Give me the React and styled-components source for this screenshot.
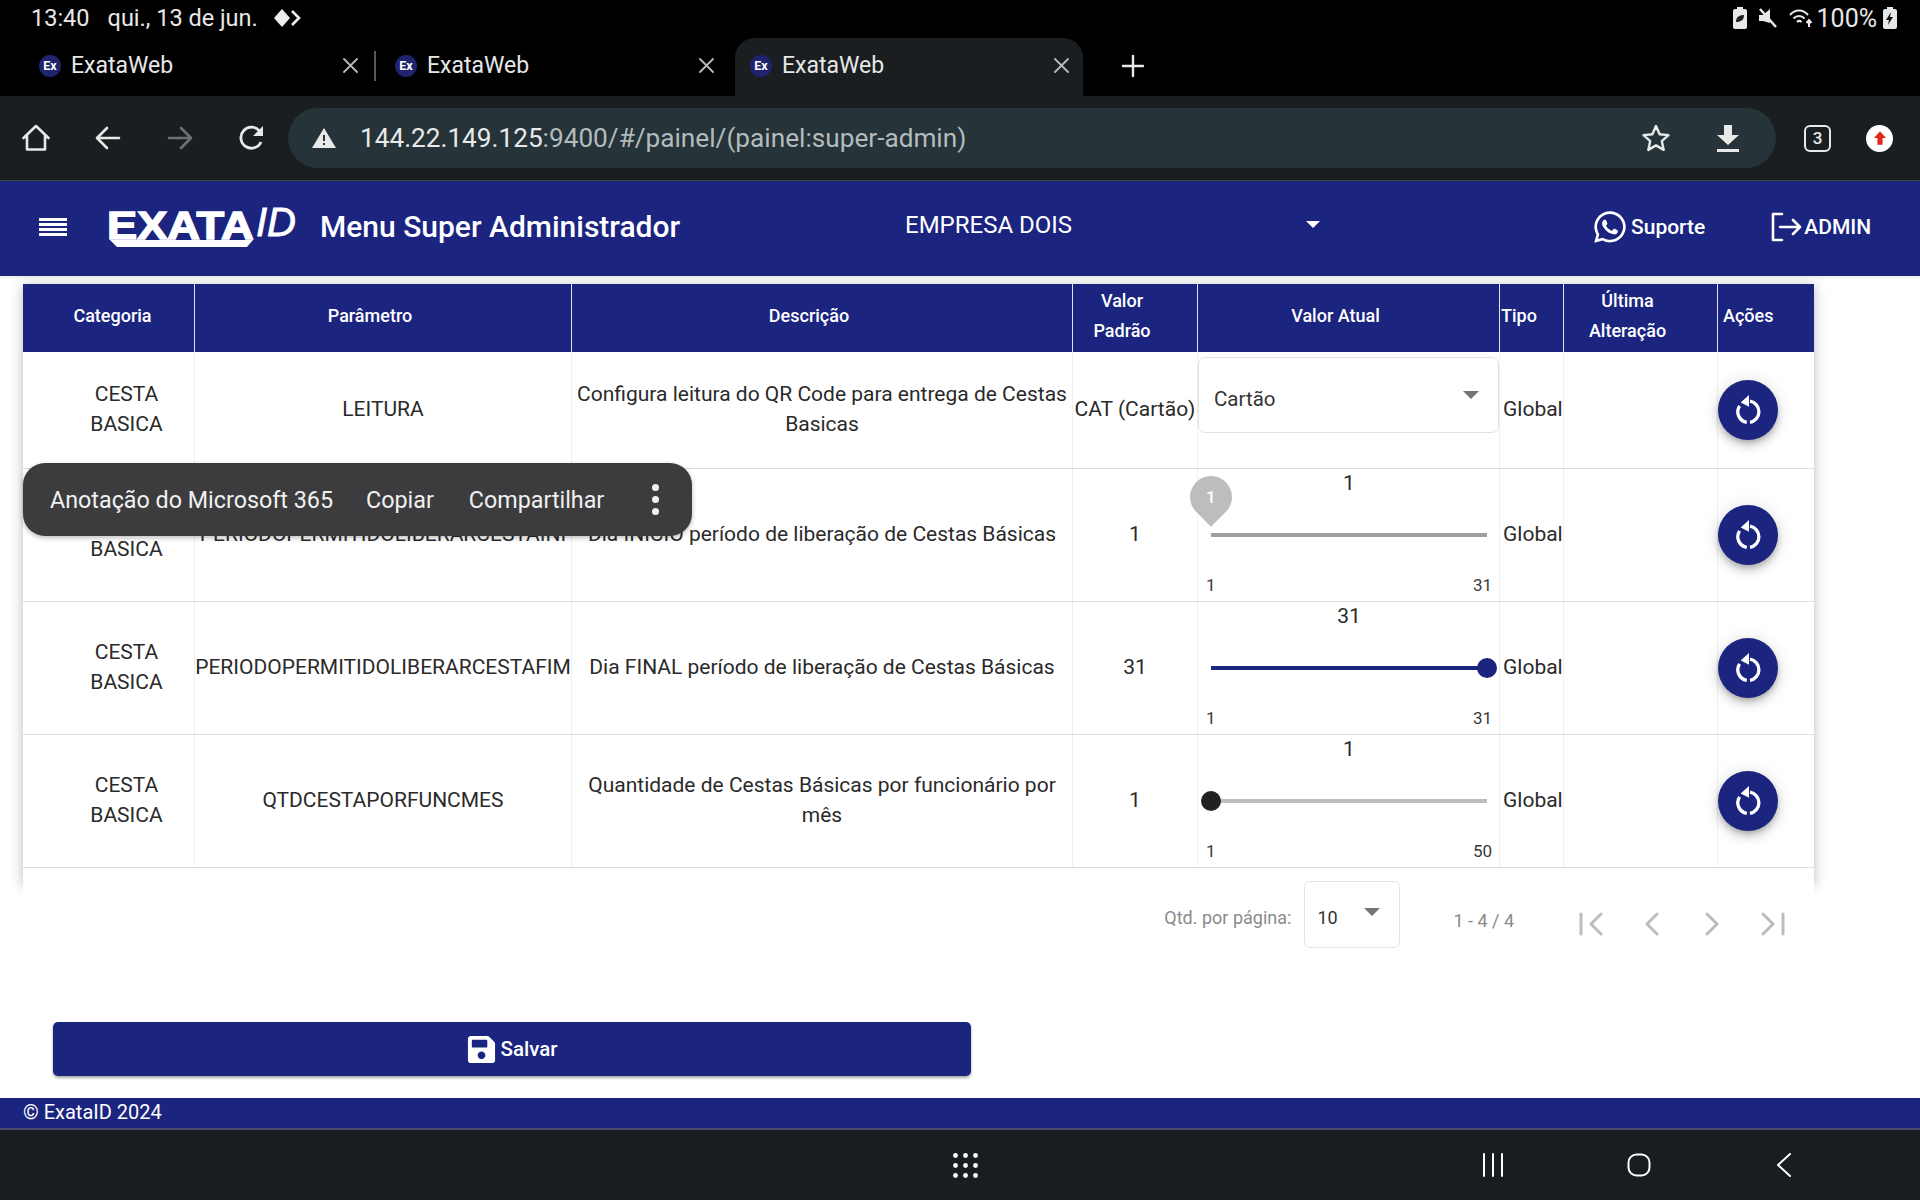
import React from 'react';
import styled, { createGlobalStyle } from 'styled-components';
import { FaWhatsapp, FaSave } from 'react-icons/fa';

const NAVY = '#1b247f';

const GlobalStyle = createGlobalStyle`
  html, body {
    margin: 0;
    padding: 0;
    background: #fff;
    font-family: Roboto, "Liberation Sans", sans-serif;
  }
  * { box-sizing: border-box; }
`;

const Page = styled.div`
  width: 1920px;
  height: 1200px;
  display: flex;
  flex-direction: column;
  overflow: hidden;
  position: relative;
`;

const Glyph = styled.svg`
  margin-left: ${p => p.$left || 0}px;
  flex: none;
`;

/* status bar */
const StatusBar = styled.div`
  height: 38px;
  background: #000;
  color: #e8e8e8;
  display: flex;
  align-items: center;
  padding: 0 23px 2px 31px;
  font-size: 23.5px;
  flex: none;
`;
const StatusDate = styled.span`
  margin-left: 18px;
`;
const StatusRight = styled.div`
  margin-left: auto;
  display: flex;
  align-items: center;
  gap: 7px;
  font-size: 25px;
`;
const Percent = styled.span`
  margin: 0 -1px 0 -3px;
`;

/* tabs */
const TabStrip = styled.div`
  height: 58px;
  background: #000;
  display: flex;
  align-items: stretch;
  flex: none;
`;
const Tab = styled.div`
  width: ${p => p.$width}px;
  display: flex;
  align-items: center;
  padding: 0 ${p => p.$right}px 3px ${p => p.$pad}px;
  color: #e6e8e8;
  font-size: 23px;
  background: ${p => (p.$active ? '#1b1e20' : 'transparent')};
  border-radius: ${p => (p.$active ? '20px 20px 0 0' : '0')};
`;
const Favicon = styled.span`
  width: 22px;
  height: 22px;
  border-radius: 50%;
  background: #20246e;
  color: #fff;
  font-size: 12.5px;
  font-weight: 700;
  display: flex;
  align-items: center;
  justify-content: center;
  margin-right: 10px;
  flex: none;
`;
const TabTitle = styled.span`
  flex: 1;
`;
const TabDivider = styled.div`
  width: 2px;
  height: 30px;
  background: #55585a;
  align-self: center;
  margin: -3px -1px 0;
`;
const NewTab = styled.div`
  margin-left: 38px;
  padding-bottom: 3px;
  display: flex;
  align-items: center;
`;

/* toolbar */
const Toolbar = styled.div`
  height: 85px;
  background: #1b1e20;
  border-bottom: 1px solid #39463c;
  display: flex;
  align-items: center;
  flex: none;
`;
const ToolIcon = styled.div`
  width: 72px;
  height: 40px;
  display: flex;
  align-items: center;
  justify-content: center;
  flex: none;
`;
const AddressBar = styled.div`
  width: 1488px;
  height: 60px;
  border-radius: 30px;
  background: #263338;
  display: flex;
  align-items: center;
  padding-right: 12px;
  flex: none;
`;
const Warn = styled.div`
  width: 72px;
  display: flex;
  justify-content: center;
`;
const Url = styled.div`
  font-size: 26.2px;
  color: #b4bbbd;
  flex: 1;
  b {
    font-weight: 400;
    color: #e8eaea;
  }
`;
const TabCount = styled.div`
  width: 27px;
  height: 27px;
  margin-left: 28px;
  border: 2px solid #e8eaea;
  border-radius: 6px;
  color: #e8eaea;
  font-size: 17px;
  font-weight: 500;
  display: flex;
  align-items: center;
  justify-content: center;
`;
const Avatar = styled.div`
  width: 27px;
  height: 27px;
  border-radius: 50%;
  margin-left: 35px;
  background: #fff;
  display: flex;
  align-items: center;
  justify-content: center;
`;

/* app header */
const AppHeader = styled.header`
  height: 95px;
  background: ${NAVY};
  color: #fff;
  display: flex;
  align-items: center;
  padding: 0 0 3px 39px;
  flex: none;
`;
const Burger = styled.div`
  width: 28px;
  display: flex;
  flex-direction: column;
  gap: 2px;
  span {
    height: 3px;
    background: #fff;
  }
`;
const Logo = styled.div`
  position: relative;
  width: 189px;
  height: 44px;
  margin-left: 40px;
  flex: none;
`;
const LogoWord = styled.span`
  position: absolute;
  left: 0;
  top: -1px;
  font-family: "Liberation Sans", Arial, sans-serif;
  font-weight: 700;
  font-size: 38px;
  line-height: 44px;
  -webkit-text-stroke: 1.4px #fff;
  transform: scaleX(1.19);
  transform-origin: left center;
`;
const LogoId = styled.span`
  position: absolute;
  left: 149px;
  top: -5px;
  font-family: "Liberation Sans", Arial, sans-serif;
  font-style: italic;
  font-size: 40px;
  line-height: 44px;
  font-weight: 400;
  -webkit-text-stroke: 0.8px #fff;
`;
const LogoSwoosh = styled.svg`
  position: absolute;
  left: 3px;
  top: 34px;
`;
const AppTitle = styled.h1`
  margin: 0 0 2px 24px;
  font-size: 30px;
  font-weight: 500;
  width: 585px;
  flex: none;
`;
const CompanySelect = styled.div`
  width: 415px;
  display: flex;
  align-items: center;
  justify-content: space-between;
  font-size: 24px;
  margin-bottom: 5px;
  flex: none;
`;
const Caret = styled.span`
  display: block;
  width: 0;
  height: 0;
  border-left: ${p => p.$size}px solid transparent;
  border-right: ${p => p.$size}px solid transparent;
  border-top: ${p => p.$size}px solid ${p => p.$color};
`;
const HeaderLink = styled.div`
  display: flex;
  align-items: center;
  font-size: 21px;
  font-weight: 500;
  gap: ${p => p.$gap}px;
  margin-left: ${p => p.$left}px;
`;

/* content */
const Main = styled.main`
  flex: 1;
  background: #fff;
  display: flex;
  flex-direction: column;
  padding-top: 8px;
  box-shadow: inset 0 4px 4px -3px rgba(0, 0, 0, 0.12);
`;
const Card = styled.div`
  width: 1791px;
  margin-left: 23px;
  height: 600px;
  background: #fff;
  box-shadow: 0 2px 12px rgba(0, 0, 0, 0.28);
`;
const cols = '172px 377px 501px 125px 302px 64px 154px 96px';
const HeadRow = styled.div`
  display: grid;
  grid-template-columns: ${cols};
  height: 68px;
  background: ${NAVY};
`;
const HeadCell = styled.div`
  display: flex;
  align-items: center;
  justify-content: ${p => p.$justify || 'center'};
  text-align: center;
  padding: ${p => p.$pad || '0 26px 5px 0'};
  color: #fff;
  font-size: 18px;
  font-weight: 500;
  line-height: 30px;
  border-right: 1px solid #dfe1ee;
  &:last-child { border-right: 0; }
`;
const Row = styled.div`
  display: grid;
  grid-template-columns: ${cols};
  height: ${p => p.$height}px;
  border-bottom: 1px solid #dcdcdc;
`;
const Cell = styled.div`
  display: flex;
  align-items: center;
  justify-content: ${p => p.$justify || 'center'};
  text-align: center;
  padding: ${p => p.$pad || '0 4px 2px'};
  font-size: 21px;
  line-height: 30px;
  color: #2a2a2a;
  border-right: 1px solid #f0f0f0;
  &:last-child { border-right: 0; }
  white-space: ${p => (p.$nowrap ? 'nowrap' : 'normal')};
`;
const ValueCell = styled.div`
  position: relative;
  border-right: 1px solid #f0f0f0;
  padding-top: ${p => (p.$slider ? 2 : 5)}px;
`;
const SelectBox = styled.div`
  width: 301px;
  height: 76px;
  border: 1px solid #e2e2e2;
  border-radius: 7px;
  display: flex;
  align-items: center;
  justify-content: space-between;
  padding: 8px 19px 0 15px;
  font-size: 20.5px;
  color: #333;
`;
const SelectCaret = styled.span`
  margin-bottom: 8px;
`;
const SliderWrap = styled.div`
  height: 127px;
  display: flex;
  flex-direction: column;
  padding: 0 12px 0 13px;
`;
const SliderValue = styled.div`
  text-align: center;
  font-size: 21px;
  line-height: 24px;
  height: 54px;
  color: #2a2a2a;
`;
const Track = styled.div`
  position: relative;
  height: 4px;
  margin-top: 8px;
  background: ${p => p.$color};
`;
const Thumb = styled.span`
  position: absolute;
  top: 50%;
  left: ${p => p.$at}%;
  width: 20px;
  height: 20px;
  border-radius: 50%;
  background: ${p => p.$color};
  transform: translate(-50%, -50%);
`;
const Pin = styled.span`
  position: absolute;
  left: 0;
  bottom: 19px;
  width: 42px;
  height: 42px;
  background: #bdbdbd;
  border-radius: 50% 50% 0 50%;
  transform: translateX(-50%) rotate(45deg);
  display: flex;
  align-items: center;
  justify-content: center;
`;
const PinText = styled.span`
  transform: rotate(-45deg);
  color: #fff;
  font-size: 17px;
  font-weight: 500;
`;
const SliderEnds = styled.div`
  display: flex;
  justify-content: space-between;
  font-size: 17px;
  line-height: 20px;
  margin: 38px -5px 0 -5px;
  color: #3a3a3a;
`;
const RoundButton = styled.button`
  width: 60px;
  height: 60px;
  border: 0;
  border-radius: 50%;
  background: ${NAVY};
  display: flex;
  align-items: center;
  justify-content: center;
  padding: 0 0 2px;
  box-shadow: 0 3px 5px -1px rgba(0, 0, 0, 0.2), 0 6px 10px rgba(0, 0, 0, 0.14),
    0 1px 18px rgba(0, 0, 0, 0.12);
`;

/* paginator */
const Paginator = styled.div`
  width: 1791px;
  height: 72px;
  margin: -6px 0 0 23px;
  background: #fff;
  position: relative;
  display: flex;
  align-items: center;
  padding-right: 24px;
  justify-content: flex-end;
  color: #8a8a8a;
  font-size: 18px;
`;
const PageLabel = styled.span`
  margin-top: 7px;
`;
const PerPageBox = styled.div`
  width: 96px;
  height: 67px;
  margin: 0 53px 0 13px;
  border: 1px solid #e4e4e4;
  border-radius: 6px;
  display: flex;
  align-items: center;
  justify-content: space-between;
  padding: 7px 19px 0 12px;
  color: #333;
`;
const PerPageCaret = styled.span`
  margin-bottom: 12px;
`;
const PageRange = styled.span`
  margin-right: 60px;
  margin-top: 12px;
`;
const PageButton = styled.div`
  width: 36px;
  margin-left: ${p => (p.$first ? 0 : 24)}px;
  margin-top: 19px;
  display: flex;
  justify-content: center;
`;

const SaveButton = styled.button`
  width: 918px;
  height: 54px;
  margin: 72px 0 0 53px;
  border: 0;
  border-radius: 5px;
  background: ${NAVY};
  color: #fff;
  font-family: inherit;
  font-size: 20.5px;
  font-weight: 500;
  display: flex;
  align-items: center;
  justify-content: center;
  gap: 3px;
  box-shadow: 0 2px 3px rgba(0, 0, 0, 0.35);
`;

const Footer = styled.footer`
  height: 32px;
  background: ${NAVY};
  border-bottom: 2px solid #474c70;
  color: #fff;
  font-size: 20px;
  line-height: 28px;
  padding-left: 23px;
  flex: none;
`;
const NavBar = styled.nav`
  height: 70px;
  background: #1a1d1f;
  display: flex;
  align-items: center;
  flex: none;
`;
const NavSlot = styled.div`
  margin-left: ${p => p.$left}px;
  display: flex;
`;

/* text selection popup, floats over the table */
const SelectionMenu = styled.div`
  position: absolute;
  left: 23px;
  top: 463px;
  width: 669px;
  height: 73px;
  border-radius: 22px;
  background: #3c3c3e;
  color: #f1f1f1;
  font-size: 23.3px;
  display: flex;
  align-items: center;
  padding-left: 27px;
  box-shadow: 0 2px 5px rgba(0, 0, 0, 0.25);
`;
const MenuItem = styled.span`
  margin-right: ${p => p.$gap}px;
`;
const MenuDots = styled.span`
  display: flex;
  flex-direction: column;
  gap: 5px;
  i {
    width: 7px;
    height: 7px;
    background: #f1f1f1;
    border-radius: 50%;
  }
`;

const Stroke = ({ w, h, view, color = '#e8eaea', sw = 2.2, d }) => (
  <svg width={w} height={h} viewBox={view} fill="none" stroke={color} strokeWidth={sw} strokeLinecap="round" strokeLinejoin="round">
    <path d={d} />
  </svg>
);

const CloseIcon = () => <Stroke w={15} h={15} view="0 0 15 15" color="#b8baba" sw={1.8} d="M1 1 14 14M14 1 1 14" />;

const ResetIcon = () => (
  <svg width="25" height="29" viewBox="0 0 25 29" fill="none">
    <path d="M14 6.200A10.700 10.700 0 0 1 14 27.300" stroke="#fff" strokeWidth="3.300" />
    <path d="M10.800 27.300A10.700 10.700 0 0 1 3.600 10.800" stroke="#fff" strokeWidth="3.300" />
    <path d="M13 0 4.700 7.500 13 11.700z" fill="#fff" />
  </svg>
);

const Slider = ({ value, max, position, kind }) => {
  const track = { idle: '#9e9e9e', full: NAVY, low: '#bdbdbd' }[kind];
  return (
    <SliderWrap>
      <SliderValue>{value}</SliderValue>
      <Track $color={track}>
        {kind === 'idle' && (
          <Pin>
            <PinText>{value}</PinText>
          </Pin>
        )}
        {kind === 'full' && <Thumb $at={position} $color={NAVY} />}
        {kind === 'low' && <Thumb $at={position} $color="#212121" />}
      </Track>
      <SliderEnds>
        <span>1</span>
        <span>{max}</span>
      </SliderEnds>
    </SliderWrap>
  );
};

const rows = [
  {
    param: 'LEITURA',
    desc: 'Configura leitura do QR Code para entrega de Cestas Basicas',
    def: 'CAT (Cartão)',
    height: 117
  },
  {
    param: 'PERIODOPERMITIDOLIBERARCESTAINI',
    desc: 'Dia INICIO período de liberação de Cestas Básicas',
    def: '1',
    height: 133,
    slider: { value: 1, max: 31, position: 0, kind: 'idle' }
  },
  {
    param: 'PERIODOPERMITIDOLIBERARCESTAFIM',
    desc: 'Dia FINAL período de liberação de Cestas Básicas',
    def: '31',
    height: 133,
    slider: { value: 31, max: 31, position: 100, kind: 'full' }
  },
  {
    param: 'QTDCESTAPORFUNCMES',
    desc: 'Quantidade de Cestas Básicas por funcionário por mês',
    def: '1',
    height: 133,
    slider: { value: 1, max: 50, position: 0, kind: 'low' }
  }
];

const dotSpots = [2.5, 12.5, 22.5];

const App = () => (
  <Page>
    <GlobalStyle />
    <StatusBar>
      <span>13:40</span>
      <StatusDate>qui., 13 de jun.</StatusDate>
      <Glyph $left={16} width="28" height="20" viewBox="0 0 28 18">
        <path d="M8 0 16 9 8 18 0 9z" fill="#eee" />
        <path d="M18 2 25 9 18 16" fill="none" stroke="#eee" strokeWidth="2.6" />
      </Glyph>
      <StatusRight>
        <svg width="14" height="22" viewBox="0 0 14 22">
          <path d="M4 0h6v2h2a2 2 0 0 1 2 2v16a2 2 0 0 1-2 2H2a2 2 0 0 1-2-2V4a2 2 0 0 1 2-2h2z" fill="#e8e8e8" />
          <path d="M3 15c0-5 3-7 8-7 0 5-3 7-8 7z" fill="#222" />
        </svg>
        <Glyph $left={4} width="20" height="22" viewBox="0 0 20 22">
          <path d="M1 8h4l7-6v14L5 14H1z" fill="#e8e8e8" />
          <path d="M2 2 18 20" stroke="#e8e8e8" strokeWidth="2.5" />
        </Glyph>
        <Glyph $left={4} width="24" height="22" viewBox="0 0 24 22" fill="none" stroke="#e8e8e8" strokeWidth="2">
          <path d="M1 8c5-6 13-6 18 0M4.500 11.500c3-3.500 8-3.500 11 0M8 15c1.500-1.500 3-1.500 4.500 0" />
          <path d="M20 20v-6M17.500 16l2.500-3 2.500 3M10 19v.1" />
        </Glyph>
        <Percent>100%</Percent>
        <svg width="14" height="22" viewBox="0 0 14 22">
          <path d="M4 0h6v2h2a2 2 0 0 1 2 2v16a2 2 0 0 1-2 2H2a2 2 0 0 1-2-2V4a2 2 0 0 1 2-2h2z" fill="#e8e8e8" />
          <path d="M8 5 3 13h3l-1 5 5-8H7z" fill="#111" />
        </svg>
      </StatusRight>
    </StatusBar>

    <TabStrip>
      <Tab $width={375} $pad={39} $right={17}>
        <Favicon>Ex</Favicon>
        <TabTitle>ExataWeb</TabTitle>
        <CloseIcon />
      </Tab>
      <TabDivider />
      <Tab $width={360} $pad={20} $right={21}>
        <Favicon>Ex</Favicon>
        <TabTitle>ExataWeb</TabTitle>
        <CloseIcon />
      </Tab>
      <Tab $width={348} $pad={15} $right={14} $active>
        <Favicon>Ex</Favicon>
        <TabTitle>ExataWeb</TabTitle>
        <CloseIcon />
      </Tab>
      <NewTab>
        <Stroke w={24} h={24} view="0 0 24 24" sw={2.4} d="M12 2v20M2 12h20" />
      </NewTab>
    </TabStrip>

    <Toolbar>
      <ToolIcon>
        <Stroke w={30} h={30} view="0 0 30 30" sw={2.6} d="M2.500 15 15 3l12.500 12M6 13v13.500h18V13" />
      </ToolIcon>
      <ToolIcon>
        <Stroke w={26} h={26} view="0 0 26 26" sw={2.6} d="M24 13H2M12 3 2 13l10 10" />
      </ToolIcon>
      <ToolIcon>
        <Stroke w={26} h={26} view="0 0 26 26" color="#6e7173" sw={2.6} d="M2 13h22M14 3l10 10-10 10" />
      </ToolIcon>
      <ToolIcon>
        <svg width="28" height="28" viewBox="0 0 28 28" fill="none">
          <path d="M23 18a10.500 10.500 0 1 1-1.500-11" stroke="#e8eaea" strokeWidth="2.800" />
          <path d="M25 2v10H15z" fill="#e8eaea" />
        </svg>
      </ToolIcon>
      <AddressBar>
        <Warn>
          <svg width="24" height="20" viewBox="0 0 24 20">
            <path d="M12 0 24 20H0z" fill="#e8eaea" />
            <path d="M11 7h2v6h-2zM11 15h2v2h-2z" fill="#263338" />
          </svg>
        </Warn>
        <Url>
          <b>144.22.149.125</b>:9400/#/painel/(painel:super-admin)
        </Url>
        <ToolIcon>
          <svg width="30" height="30" viewBox="0 0 30 30" fill="none">
            <path d="M15 3l3.600 8.200 8.900.9-6.700 6 1.900 8.800L15 22.400l-7.700 4.500 1.900-8.800-6.700-6 8.900-.9z" stroke="#e8eaea" strokeWidth="2.400" strokeLinejoin="round" />
          </svg>
        </ToolIcon>
        <ToolIcon>
          <svg width="24" height="28" viewBox="0 0 24 28">
            <path d="M8 1h8v10h7L12 21 1 11h7z" fill="#e8eaea" />
            <path d="M1 25h22v3H1z" fill="#e8eaea" />
          </svg>
        </ToolIcon>
      </AddressBar>
      <TabCount>3</TabCount>
      <Avatar>
        <svg width="12" height="14" viewBox="0 0 14 16">
          <path d="M7 0 14 8H10v8H4V8H0z" fill="#e0271c" />
        </svg>
      </Avatar>
    </Toolbar>

    <AppHeader>
      <Burger>
        <span />
        <span />
        <span />
        <span />
      </Burger>
      <Logo>
        <LogoWord>EXATA</LogoWord>
        <LogoId>ID</LogoId>
        <LogoSwoosh width="143" height="9" viewBox="0 0 143 9">
          <path d="M0 1h143l-6 7H7z" fill="#fff" />
        </LogoSwoosh>
      </Logo>
      <AppTitle>Menu Super Administrador</AppTitle>
      <CompanySelect>
        <span>EMPRESA DOIS</span>
        <Caret $size={7} $color="#fff" />
      </CompanySelect>
      <HeaderLink $gap={3} $left={272}>
        <FaWhatsapp size={36} />
        Suporte
      </HeaderLink>
      <HeaderLink $gap={2} $left={65}>
        <svg width="32" height="32" viewBox="0 0 32 32" fill="none" stroke="#fff" strokeWidth="2.600" strokeLinecap="round" strokeLinejoin="round">
          <path d="M12 3H3v26h9M10 16h20M23 9l7 7-7 7" />
        </svg>
        ADMIN
      </HeaderLink>
    </AppHeader>

    <Main>
      <Card>
        <HeadRow>
          <HeadCell $pad="0 24px 5px 32px">Categoria</HeadCell>
          <HeadCell>Parâmetro</HeadCell>
          <HeadCell>Descrição</HeadCell>
          <HeadCell>
            Valor
            <br />
            Padrão
          </HeadCell>
          <HeadCell>Valor Atual</HeadCell>
          <HeadCell $justify="flex-start" $pad="0 0 5px 1px">Tipo</HeadCell>
          <HeadCell>
            Última
            <br />
            Alteração
          </HeadCell>
          <HeadCell $justify="flex-start" $pad="0 0 5px 5px">Ações</HeadCell>
        </HeadRow>
        {rows.map(row => (
          <Row key={row.param} $height={row.height}>
            <Cell $pad="0 8px 2px 44px">CESTA BASICA</Cell>
            <Cell $pad="0 0 2px" $nowrap>{row.param}</Cell>
            <Cell>{row.desc}</Cell>
            <Cell $pad="0 0 2px" $nowrap>{row.def}</Cell>
            <ValueCell $slider={Boolean(row.slider)}>
              {row.slider ? (
                <Slider {...row.slider} />
              ) : (
                <SelectBox>
                  <span>Cartão</span>
                  <SelectCaret>
                    <Caret $size={8} $color="#757575" />
                  </SelectCaret>
                </SelectBox>
              )}
            </ValueCell>
            <Cell $pad="0 0 2px 3px" $justify="flex-start">Global</Cell>
            <Cell />
            <Cell $pad="0" $justify="flex-start">
              <RoundButton>
                <ResetIcon />
              </RoundButton>
            </Cell>
          </Row>
        ))}
      </Card>
      <Paginator>
        <PageLabel>Qtd. por página:</PageLabel>
        <PerPageBox>
          <span>10</span>
          <PerPageCaret>
            <Caret $size={8} $color="#757575" />
          </PerPageCaret>
        </PerPageBox>
        <PageRange>1 - 4 / 4</PageRange>
        <PageButton $first>
          <Stroke w={26} h={24} view="0 0 26 24" color="#bdbdbd" sw={3} d="M2 2v20M22 2 12 12l10 10" />
        </PageButton>
        <PageButton>
          <Stroke w={16} h={24} view="0 0 16 24" color="#bdbdbd" sw={3} d="M13 2 3 12l10 10" />
        </PageButton>
        <PageButton>
          <Stroke w={16} h={24} view="0 0 16 24" color="#bdbdbd" sw={3} d="M3 2l10 10L3 22" />
        </PageButton>
        <PageButton>
          <Stroke w={26} h={24} view="0 0 26 24" color="#bdbdbd" sw={3} d="M24 2v20M4 2l10 10L4 22" />
        </PageButton>
      </Paginator>
      <SaveButton>
        <FaSave size={31} />
        Salvar
      </SaveButton>
    </Main>

    <Footer>© ExataID 2024</Footer>
    <NavBar>
      <NavSlot $left={953}>
        <svg width="25" height="25" viewBox="0 0 25 25" fill="#fff">
          {dotSpots.flatMap(y =>
            dotSpots.map(x => <circle key={`${x}-${y}`} cx={x} cy={y} r="2.400" />)
          )}
        </svg>
      </NavSlot>
      <NavSlot $left={503}>
        <Stroke w={24} h={24} view="0 0 24 24" color="#fff" sw={2} d="M3 1v22M12 1v22M21 1v22" />
      </NavSlot>
      <NavSlot $left={122}>
        <svg width="24" height="24" viewBox="0 0 24 24" fill="none">
          <rect x="1.500" y="1.500" width="21" height="21" rx="8" stroke="#fff" strokeWidth="2" />
        </svg>
      </NavSlot>
      <NavSlot $left={125}>
        <Stroke w={16} h={24} view="0 0 16 24" color="#fff" sw={2} d="M14 1 2 12l12 11" />
      </NavSlot>
    </NavBar>

    <SelectionMenu>
      <MenuItem $gap={33}>Anotação do Microsoft 365</MenuItem>
      <MenuItem $gap={35}>Copiar</MenuItem>
      <MenuItem $gap={48}>Compartilhar</MenuItem>
      <MenuDots>
        <i />
        <i />
        <i />
      </MenuDots>
    </SelectionMenu>
  </Page>
);

export default App;
